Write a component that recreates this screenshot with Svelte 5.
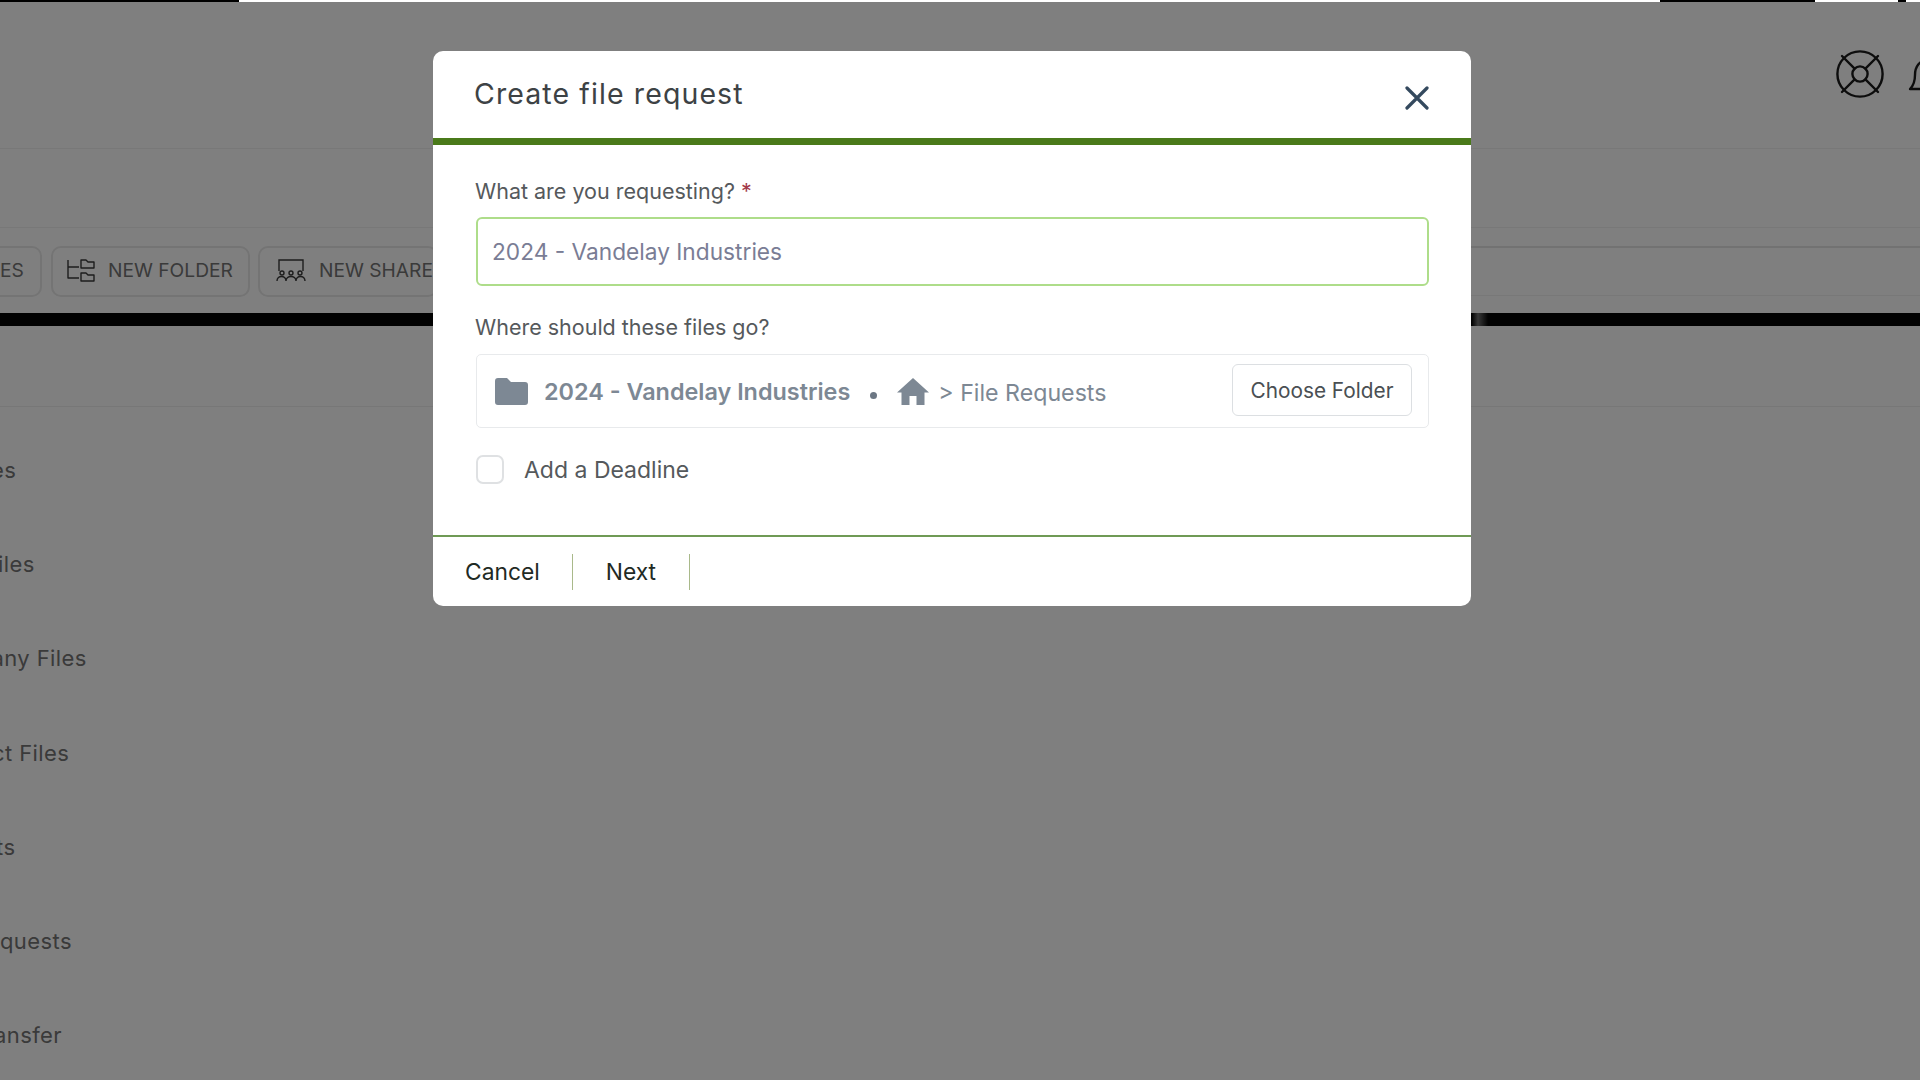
<script>
  const navItems = [
    { text: 'es', shift: -9 },
    { text: 'iles', shift: -2 },
    { text: 'any Files', shift: -8.5 },
    { text: 'ct Files', shift: -8 },
    { text: 'ts', shift: -4 },
    { text: 'quests', shift: 0 },
    { text: 'ansfer', shift: -6 }
  ];
</script>

<div class="page">
  <div class="strip">
    <span class="seg dark a"></span>
    <span class="seg light b"></span>
    <span class="seg dark c"></span>
    <span class="seg light d"></span>
    <span class="seg dark e"></span>
    <span class="seg light f"></span>
  </div>

  <header class="top">
    <svg class="ring" viewBox="0 0 48 48" fill="none" stroke="#1a1a1a" stroke-width="2.4" stroke-linecap="round">
      <circle cx="24" cy="24" r="22.6" />
      <circle cx="24" cy="24" r="7.6" />
      <path d="M6 6 18.600 18.600M42 6 29.400 18.600M6 42 18.600 29.400M42 42 29.400 29.400" />
    </svg>
    <svg class="bell" viewBox="0 0 30 36" fill="none" stroke="#1a1a1a" stroke-width="2.4" stroke-linejoin="round">
      <path d="M2 31c4-4 5-8 5-14C7 8 12 3 18 2c7 0 11 6 11 15v14z" />
    </svg>
  </header>

  <div class="subhead"></div>

  <div class="tools">
    <div class="tool tool-es">ES</div>
    <div class="tool tool-folder">
      <svg viewBox="0 0 28 24" fill="none" stroke="#3a3a3a" stroke-width="1.4" stroke-linejoin="round">
        <path d="M1 2v18h11M1 9h11" />
        <path d="M14 2h5l2 2h6v6H14zM14 15h5l2 2h6v6H14z" />
      </svg>
      NEW FOLDER
    </div>
    <div class="tool tool-share">
      <svg viewBox="0 0 30 24" fill="none" stroke="#3a3a3a" stroke-width="1.4">
        <path d="M3 13V2h24v11" />
        <circle cx="6" cy="15" r="2" /><circle cx="15" cy="15" r="2" /><circle cx="24" cy="15" r="2" />
        <path d="M1 23c0-6 9-6 9 0M10 23c0-6 10-6 10 0M20 23c0-6 9-6 9 0" />
      </svg>
      NEW SHARE
    </div>
    <div class="search"></div>
  </div>

  <div class="band"></div>
  <div class="crumb"></div>

  <nav class="nav">
    {#each navItems as item}
      <div class="nav-item" style="margin-left: {item.shift}px">{item.text}</div>
    {/each}
  </nav>

  <div class="overlay">
    <section class="modal">
      <div class="modal-head">
        <h2>Create file request</h2>
        <svg class="close" viewBox="0 0 24 24" fill="none" stroke="#34495e" stroke-width="3.2" stroke-linecap="round">
          <path d="M2 2 22 22M22 2 2 22" />
        </svg>
      </div>

      <div class="modal-body">
        <div class="label">What are you requesting? <span class="req">*</span></div>
        <div class="input">2024 - Vandelay Industries</div>

        <div class="label second">Where should these files go?</div>
        <div class="dest">
          <svg class="folder" viewBox="0 0 33 27" fill="#7d8894">
            <path d="M0 3a3 3 0 0 1 3-3h9l4 4h14a3 3 0 0 1 3 3v17a3 3 0 0 1-3 3H3a3 3 0 0 1-3-3z" />
          </svg>
          <strong>2024 - Vandelay Industries</strong>
          <span class="dot"></span>
          <svg class="home" viewBox="0 0 32 27" fill="#7d8894">
            <path d="M16 0 32 14.500h-4.500V27H19.500V18h-7v9H4.500V14.500H0z" />
          </svg>
          <span class="path">&gt; File Requests</span>
          <div class="choose">Choose Folder</div>
        </div>

        <div class="check-row">
          <span class="box"></span>
          <span class="check-label">Add a Deadline</span>
        </div>
      </div>

      <footer class="modal-foot">
        <div class="action">Cancel</div>
        <div class="action">Next</div>
      </footer>
    </section>
  </div>
</div>

<style>
  :global(body) {
    margin: 0;
    background: #fff;
    font-family: Inter, "Liberation Sans", sans-serif;
  }
  .page {
    position: relative;
    width: 1920px;
    height: 1080px;
    overflow: hidden;
    background: #fff;
    color: #747474;
  }
  .strip { display: flex; height: 2px; position: relative; z-index: 3; }
  .seg.dark { background: #000; }
  .seg.light { background: #fff; }
  .a { width: 239px; }
  .b { width: 1421px; }
  .c { width: 155px; }
  .d { width: 83px; }
  .e { width: 8px; }
  .f { width: 14px; }

  .top {
    height: 146px;
    border-bottom: 1px solid #f0f0f0;
    display: flex;
    justify-content: flex-end;
  }
  .ring { width: 48px; height: 48px; margin-top: 48px; flex: none; }
  .bell { width: 30px; height: 36px; margin: 56px -18px 0 24px; flex: none; }
  .subhead { height: 78px; border-bottom: 1px solid #f0f0f0; }

  .tools {
    display: flex;
    gap: 9px;
    padding-top: 18px;
    height: 50px;
    align-items: flex-start;
    font-size: 19.200px;
  }
  .tool {
    height: 51px;
    box-sizing: border-box;
    border: 2px solid #e8e8e8;
    border-radius: 10px;
    padding-bottom: 3px;
    display: flex;
    align-items: center;
    gap: 13px;
    flex: none;
    color: #747474;
  }
  .tool svg { flex: none; }
  .tool-es { width: 42px; border-left: none; border-radius: 0 10px 10px 0; }
  .tool-folder { width: 199px; padding-left: 14px; }
  .tool-folder svg { width: 28px; height: 24px; }
  .tool-share { width: 180px; padding-left: 16px; margin-left: -1px; }
  .tool-share svg { width: 30px; height: 24px; }
  .search { flex: 1; height: 47px; border-top: 2px solid #e4e4e4; border-bottom: 1px solid #f0f0f0; margin-left: 1020px; }

  .band {
    height: 13px;
    margin-top: 17px;
    background: linear-gradient(90deg, #050505 1472px, #707070 1478px, #050505 1488px);
  }
  .crumb { height: 80px; border-bottom: 1px solid #eee; }

  .nav { padding-top: 16px; }
  .nav-item {
    height: 94.200px;
    line-height: 94.200px;
    font-size: 22px;
    letter-spacing: .4px;
    white-space: nowrap;
    color: #747474;
  }

  .overlay {
    position: absolute;
    inset: 0;
    z-index: 2;
    background: rgba(0, 0, 0, .5);
    display: flex;
    justify-content: center;
    align-items: flex-start;
    padding: 51px 16px 0 0;
    box-sizing: border-box;
  }
  .modal {
    width: 1038px;
    height: 555px;
    background: #fff;
    border-radius: 10px;
    display: flex;
    flex-direction: column;
    overflow: hidden;
  }
  .modal-head {
    height: 87px;
    flex: none;
    border-bottom: 7px solid #4a7a1a;
    display: flex;
    align-items: flex-start;
    justify-content: space-between;
    padding: 0 42px 0 41px;
  }
  h2 {
    margin: 25px 0 0;
    font-size: 28.500px;
    line-height: 36px;
    font-weight: 400;
    letter-spacing: 1.1px;
    color: #3d4245;
  }
  .close { width: 24px; height: 24px; margin-top: 35px; flex: none; }

  .modal-body { flex: 1; padding: 32px 42px 0 43px; font-size: 21px; }
  .label { line-height: 28px; color: #55595c; font-size: 21.500px; margin-left: -1px; }
  .req { color: #a33a4a; }
  .input {
    margin-top: 12px;
    height: 69px;
    box-sizing: border-box;
    border: 2px solid #aedd8a;
    border-radius: 6px;
    padding-left: 14px;
    display: flex;
    align-items: center;
    color: #7a7d95;
    font-size: 22.700px;
  }
  .second { margin-top: 27px; }
  .dest {
    margin-top: 13px;
    height: 74px;
    box-sizing: border-box;
    border: 1px solid #e8eaec;
    border-radius: 5px;
    padding: 0 16px 0 18px;
    display: flex;
    align-items: center;
    color: #7d8894;
  }
  .folder { width: 33px; height: 27px; flex: none; }
  .dest strong { margin-left: 16px; font-weight: 600; font-size: 23.400px; color: #7d8894; }
  .dot { width: 7px; height: 7px; margin: 8px 0 0 20px; border-radius: 50%; background: #6c7784; flex: none; }
  .home { width: 32px; height: 27px; margin-left: 20px; flex: none; }
  .path { margin-left: 9px; font-size: 23.200px; margin-top: 4px; }
  .choose {
    margin-left: auto;
    width: 180px;
    height: 52px;
    box-sizing: border-box;
    border: 1px solid #dcdfe2;
    border-radius: 6px;
    display: flex;
    align-items: center;
    justify-content: center;
    color: #4a4f53;
    font-size: 20.800px;
    margin-top: -2px;
  }
  .check-row { margin-top: 27px; display: flex; align-items: center; gap: 20px; }
  .box {
    width: 28px;
    height: 29px;
    box-sizing: border-box;
    border: 2px solid #dfe1e3;
    border-radius: 7px;
    flex: none;
  }
  .check-label { color: #55595c; font-size: 23px; }

  .modal-foot {
    height: 69px;
    flex: none;
    border-top: 2px solid #6f9a55;
    display: flex;
    align-items: center;
  }
  .action {
    height: 36px;
    display: flex;
    align-items: center;
    padding: 0 32px;
    border-right: 1px solid #a9b98a;
    color: #1f2a24;
    font-size: 22.800px;
  }
  .action + .action { padding: 0 33px; }
</style>
